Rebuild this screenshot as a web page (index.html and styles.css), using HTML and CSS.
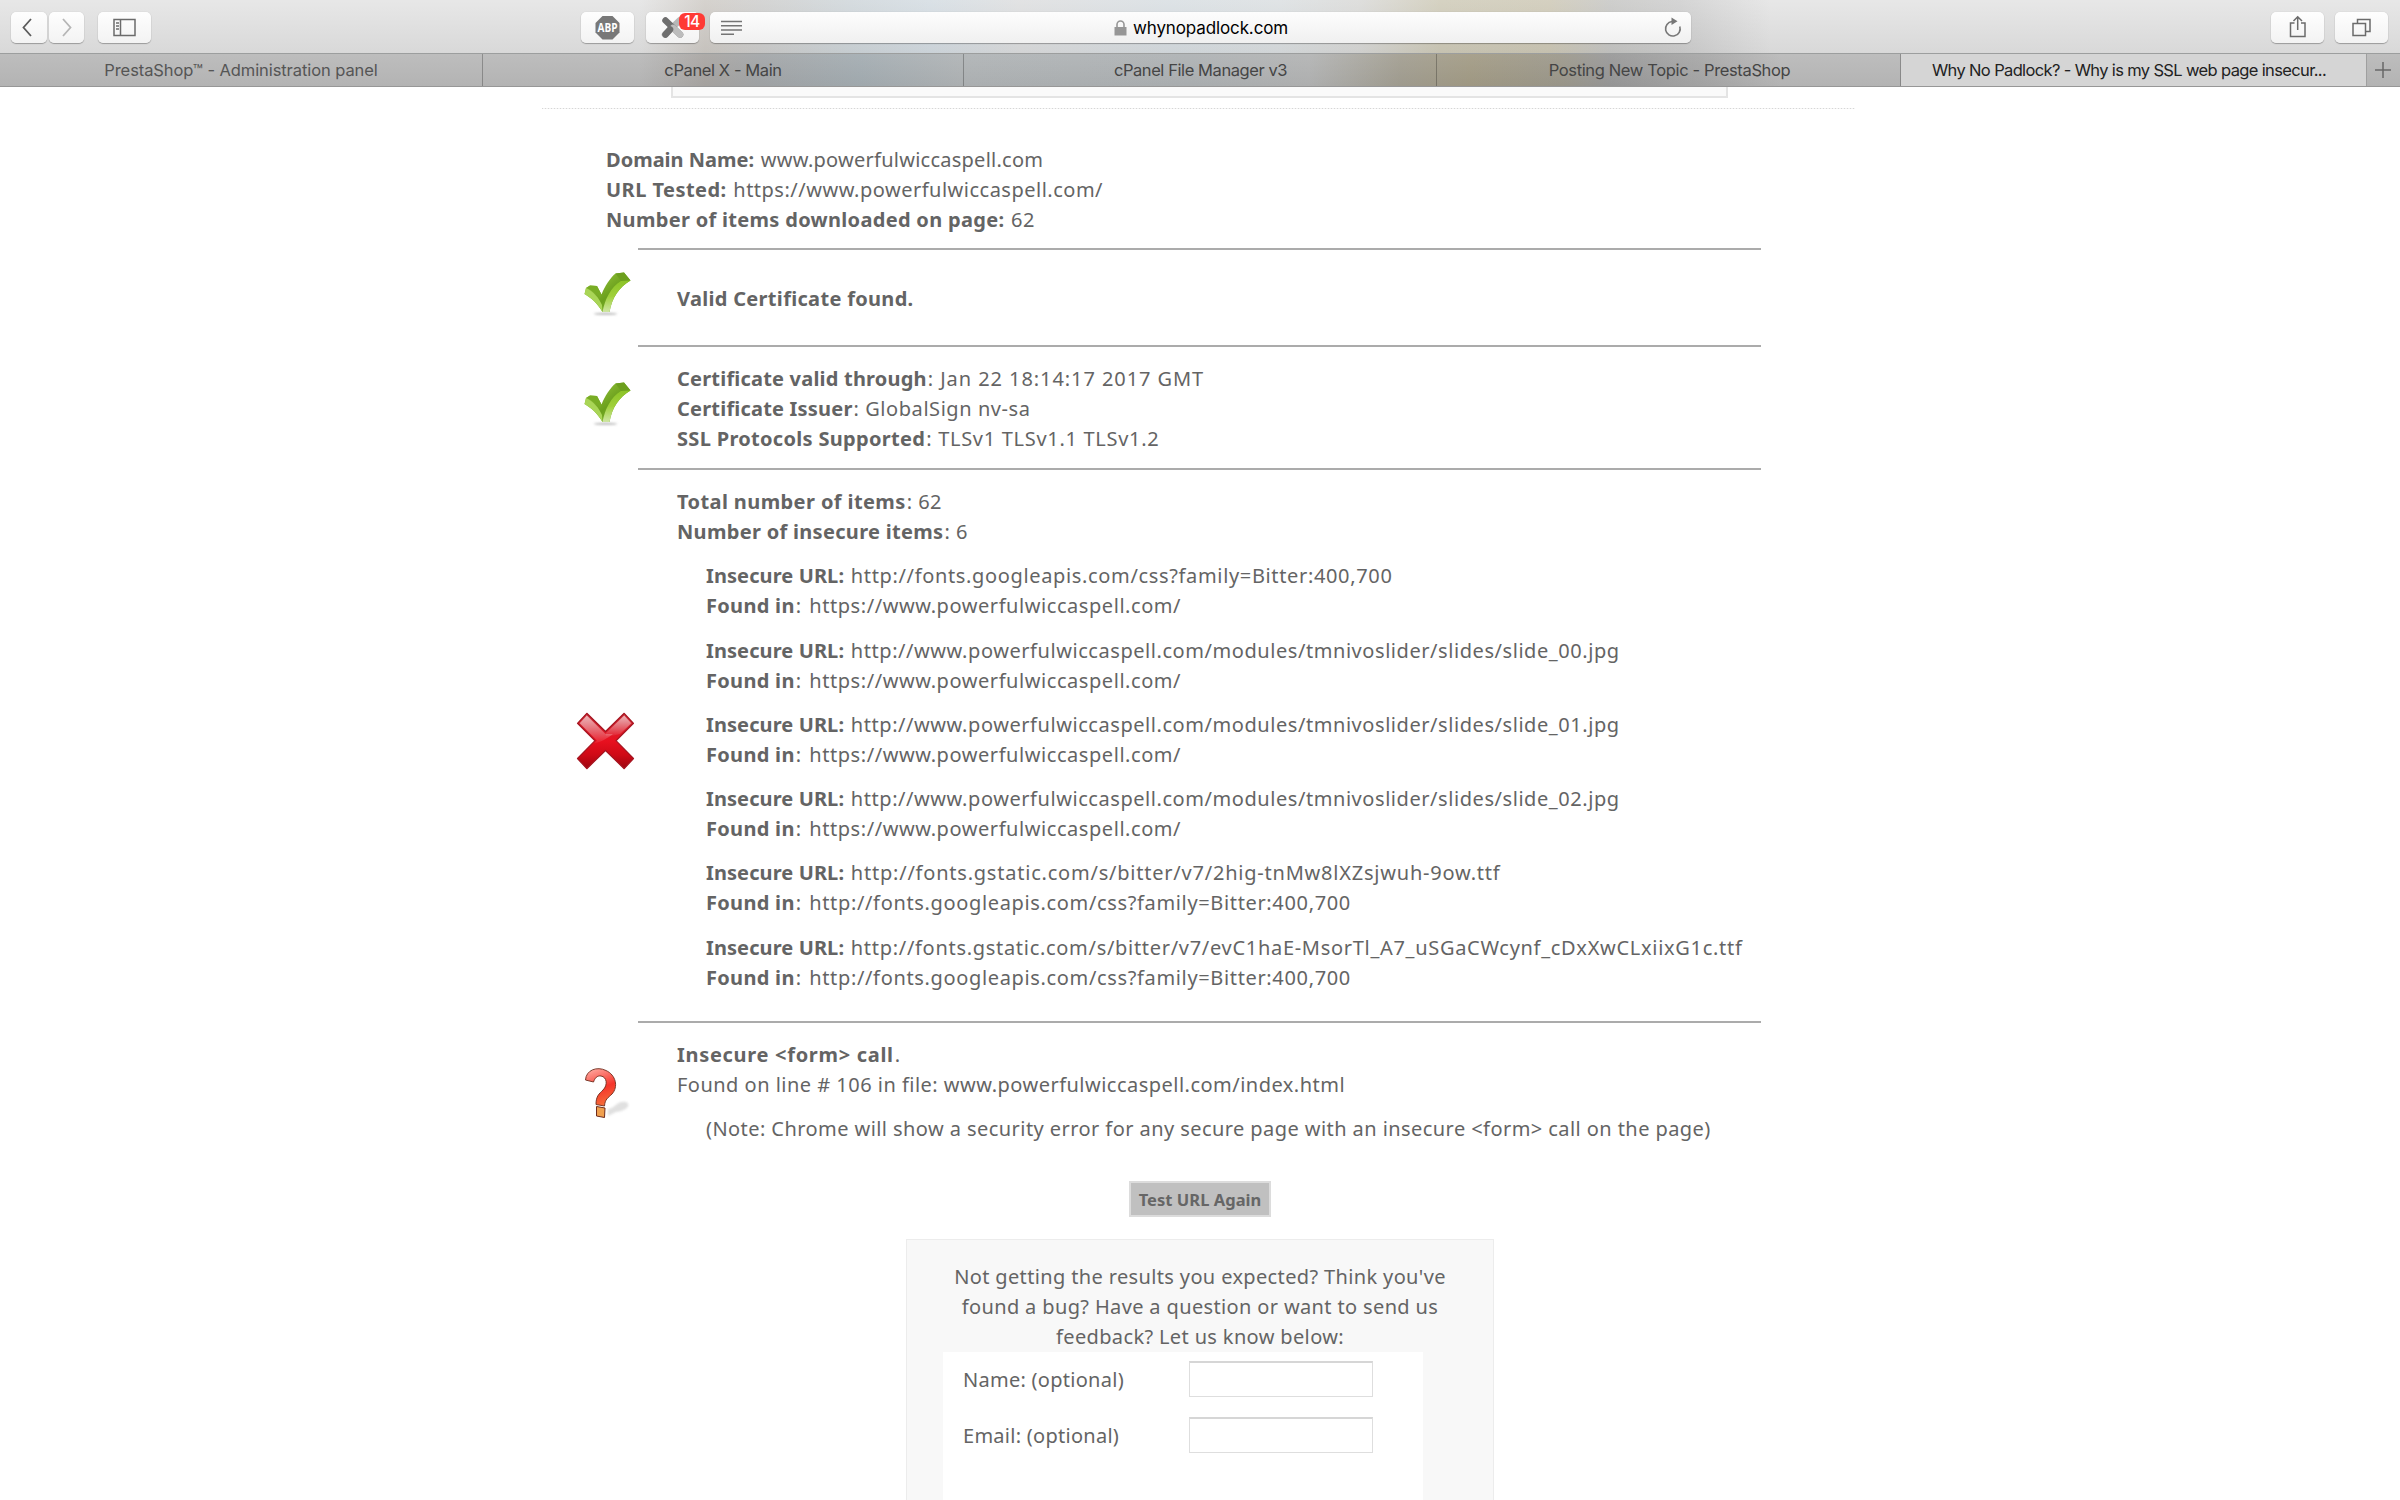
FILE: index.html
```html
<!DOCTYPE html>
<html lang="en">
<head>
    <meta charset="UTF-8">
    <meta name="viewport" content="width=device-width, initial-scale=1.0">
    <title>Why No Padlock? - Why is my SSL web page insecure?</title>
    <link rel="stylesheet" href="styles.css">
</head>
<body>

    <!-- Shared gradients and the check mark -->
    <svg class="defs" width="0" height="0">
        <defs>
            <linearGradient id="green-front" x1="0" y1="0" x2="1" y2="1">
                <stop offset="0" stop-color="#a5d04a"/>
                <stop offset="0.55" stop-color="#6ba01c"/>
                <stop offset="1" stop-color="#8abf38"/>
            </linearGradient>
            <linearGradient id="green-side" x1="0" y1="0" x2="0" y2="1">
                <stop offset="0" stop-color="#8cc327"/>
                <stop offset="0.5" stop-color="#9fd03a"/>
                <stop offset="1" stop-color="#cfe6a4"/>
            </linearGradient>
            <linearGradient id="red" x1="0" y1="0" x2="0" y2="1">
                <stop offset="0" stop-color="#c9303a"/>
                <stop offset="0.5" stop-color="#e8101f"/>
                <stop offset="0.75" stop-color="#cf0a16"/>
                <stop offset="1" stop-color="#9d0510"/>
            </linearGradient>
            <linearGradient id="gloss" x1="0" y1="0" x2="0" y2="1">
                <stop offset="0" stop-color="#ffffff" stop-opacity="0.65"/>
                <stop offset="1" stop-color="#ffffff" stop-opacity="0.05"/>
            </linearGradient>
            <linearGradient id="flame" gradientUnits="userSpaceOnUse" x1="20" y1="9" x2="34" y2="46">
                <stop offset="0" stop-color="#ffa9a0"/>
                <stop offset="0.55" stop-color="#f5352b"/>
                <stop offset="1" stop-color="#f5703a"/>
            </linearGradient>
            <filter id="soft" x="-30%" y="-100%" width="160%" height="300%"><feGaussianBlur stdDeviation="1.3"/></filter>
            <symbol id="check" viewBox="0 0 70 70">
                <ellipse cx="35.500" cy="53.800" rx="12" ry="1.200" fill="#999" opacity="0.6" filter="url(#soft)"/>
                <path d="M14.500 34 L16 28 L20 25.500 L27 26 L31.500 34.500 C35 26 40 18 45.500 13.500 L54 12.500 L60.500 20.500 C49 27 42 38 39.500 52 L32.500 52 C27 43 22 38.500 14.500 34 Z" fill="url(#green-front)"/>
                <path d="M16 28 L20 25.500 L27 26 L31.500 34.500 L30 38 C26 33 22 30 16 28 Z" fill="#79ad25"/>
                <path d="M14.500 34 L16 28 C24 32 29 38 32 45 L32.500 52 C27 43 22 38.500 14.500 34 Z" fill="#a9d556"/>
                <path d="M45.500 13.500 L54 12.500 L60.500 20.500 L51 21 Z" fill="#6c9f1e"/>
                <path d="M51 21 L60.500 20.500 C49 27 42 38 39.500 52 L32.500 52 C35 39 41 27 51 21 Z" fill="url(#green-side)"/>
            </symbol>
        </defs>
    </svg>

    <!-- Browser toolbar -->
    <header class="toolbar">
        <button class="tool back"><svg width="36" height="31" viewBox="0 0 36 31"><path d="M20 7 L12.500 15.500 L20 24" stroke="#5c5c5c" stroke-width="1.800"/></svg></button>
        <button class="tool forward"><svg width="35" height="31" viewBox="0 0 35 31"><path d="M14 7 L21.500 15.500 L14 24" stroke="#b6b6b6" stroke-width="1.800"/></svg></button>
        <button class="tool sidebar"><svg width="53" height="31" viewBox="0 0 53 31"><path d="M16 7.500 H37 V23.500 H16 Z M22.500 7.500 V23.500 M18 11 H21 M18 14 H21 M18 17 H21" stroke="#6b6b6b" stroke-width="1.500"/></svg></button>
        <button class="tool adblock">
            <svg width="53" height="31" viewBox="0 0 53 31">
                <path d="M21.500 4 H31.500 L38.500 11 V20.500 L31.500 27.500 H21.500 L14.500 20.500 V11 Z" fill="#787878"/>
                <text x="26.500" y="20" text-anchor="middle" textLength="20" lengthAdjust="spacingAndGlyphs" class="abp">ABP</text>
            </svg>
        </button>
        <button class="tool blocker">
            <svg width="53" height="31" viewBox="0 0 53 31">
                <path d="M33.500 8.500 L19 22.500" stroke="#b7b7b7" stroke-width="6.500" stroke-linecap="round"/>
                <path d="M19.500 8.500 L34 22.500" stroke="#6e6e6e" stroke-width="6.500" stroke-linecap="round"/>
                <path d="M27 16 L34 22.500" stroke="#bdbdbd" stroke-width="6.500" stroke-linecap="round"/>
                <path d="M24 17.500 L19.500 22.500" stroke="#6e6e6e" stroke-width="6.500" stroke-linecap="round"/>
            </svg>
            <span class="badge">14</span>
        </button>
        <div class="address">
            <svg width="22" height="16" viewBox="0 0 22 16"><path d="M0 1.500 H21 M0 5.700 H21 M0 10 H21 M0 14.200 H13" stroke="#747474" stroke-width="1.500"/></svg>
            <div class="site">
                <svg width="13" height="16" viewBox="0 0 13 16"><path d="M0.500 7 H12.500 V15.500 H0.500 Z" fill="#969696"/><path d="M3 7.500 V4.500 A3.500 3.500 0 0 1 10 4.500 V7.500" stroke="#969696" stroke-width="1.600"/></svg>
                <span>whynopadlock.com</span>
            </div>
            <svg width="20" height="22" viewBox="0 0 20 22"><path d="M9 4.500 A7.300 7.300 0 1 0 16.800 9.500" stroke="#777" stroke-width="1.600"/><path d="M8.500 0.500 L14.500 4.300 L8.500 8 Z" fill="#777"/></svg>
        </div>
        <button class="tool share"><svg width="53" height="31" viewBox="0 0 53 31"><path d="M23.500 11 H19.500 V24.500 H34 V11 H30 M26.700 18 V5 M22.500 9 L26.700 4.700 L31 9" stroke="#6b6b6b" stroke-width="1.500"/></svg></button>
        <button class="tool"><svg width="53" height="31" viewBox="0 0 53 31"><path d="M18 11.500 H30.500 V23.500 H18 Z M22.500 11 V7.500 H35 V19.500 H31" stroke="#6b6b6b" stroke-width="1.500"/></svg></button>
    </header>

    <nav class="tabs">
        <div class="tab tab-1">PrestaShop™ - Administration panel</div>
        <div class="tab tab-2">cPanel X - Main</div>
        <div class="tab tab-3">cPanel File Manager v3</div>
        <div class="tab tab-4">Posting New Topic - PrestaShop</div>
        <div class="tab active">Why No Padlock? - Why is my SSL web page insecur...</div>
        <div class="new-tab"><svg width="18" height="18" viewBox="0 0 18 18"><path d="M8 1 V17 M0 9 H16" stroke="#686868" stroke-width="1.500"/></svg></div>
    </nav>

    <!-- Test results -->
    <main class="page">
        <div class="url-box"></div>
        <div class="dotted"></div>

        <div class="summary">
            <p><b class="ls-0">Domain Name:</b> <span class="ls-25">www.powerfulwiccaspell.com</span></p>
            <p><b class="ls-45">URL Tested:</b> <span class="ls-50">https://www.powerfulwiccaspell.com/</span></p>
            <p><b>Number of items downloaded on page:</b> 62</p>
        </div>

        <section class="result certificate">
            <svg class="icon" width="70" height="70"><use href="#check"/></svg>
            <div class="details">
                <p><b>Valid Certificate found.</b></p>
            </div>
        </section>

        <section class="result protocols">
            <svg class="icon" width="70" height="70"><use href="#check"/></svg>
            <div class="details">
                <p><b class="ls-20">Certificate valid through</b><span class="ls-90">: Jan 22 18:14:17 2017 GMT</span></p>
                <p><b class="ls-20">Certificate Issuer</b><span class="ls-56">: GlobalSign nv-sa</span></p>
                <p><b>SSL Protocols Supported</b><span class="ls-70">: TLSv1 TLSv1.1 TLSv1.2</span></p>
            </div>
        </section>

        <section class="result items">
            <svg class="icon" width="70" height="70" viewBox="0 0 70 70">
                <path d="M16.800 8.300 L7.500 18.300 L25 35.700 L7.500 53.500 L16.800 63.700 L35.500 45.500 L54.200 63.700 L63.500 53.500 L46 35.700 L63.500 18.300 L54.200 8.300 L35.500 26.500 Z" fill="url(#red)" stroke="#a51420" stroke-width="1.200" stroke-linejoin="round"/>
                <path d="M16.800 10.500 L9.700 18.300 L27 35.500 L24 38.500 C31 37 38 33 43 29 L35.500 29 Z" fill="url(#gloss)"/>
                <path d="M54.200 10.500 L61.300 18.300 L50 29 C46 30 42 31 36 31 L35.500 28.500 Z" fill="url(#gloss)"/>
            </svg>
            <div class="details">
                <p><b class="ls-40">Total number of items</b>: 62</p>
                <p><b>Number of insecure items</b>: 6</p>
                <ul class="insecure">
                    <li>
                        <p><b class="ls-10">Insecure URL:</b> <span class="ls-65">http://fonts.googleapis.com/css?family=Bitter:400,700</span></p>
                        <p><b class="ls-30">Found in</b>: <span class="ls-56 found">https://www.powerfulwiccaspell.com/</span></p>
                    </li>
                    <li>
                        <p><b class="ls-10">Insecure URL:</b> <span class="ls-56">http://www.powerfulwiccaspell.com/modules/tmnivoslider/slides/slide_00.jpg</span></p>
                        <p><b class="ls-30">Found in</b>: <span class="ls-56 found">https://www.powerfulwiccaspell.com/</span></p>
                    </li>
                    <li>
                        <p><b class="ls-10">Insecure URL:</b> <span class="ls-56">http://www.powerfulwiccaspell.com/modules/tmnivoslider/slides/slide_01.jpg</span></p>
                        <p><b class="ls-30">Found in</b>: <span class="ls-56 found">https://www.powerfulwiccaspell.com/</span></p>
                    </li>
                    <li>
                        <p><b class="ls-10">Insecure URL:</b> <span class="ls-56">http://www.powerfulwiccaspell.com/modules/tmnivoslider/slides/slide_02.jpg</span></p>
                        <p><b class="ls-30">Found in</b>: <span class="ls-56 found">https://www.powerfulwiccaspell.com/</span></p>
                    </li>
                    <li>
                        <p><b class="ls-10">Insecure URL:</b> <span class="ls-78">http://fonts.gstatic.com/s/bitter/v7/2hig-tnMw8lXZsjwuh-9ow.ttf</span></p>
                        <p><b class="ls-30">Found in</b>: <span class="ls-65 found">http://fonts.googleapis.com/css?family=Bitter:400,700</span></p>
                    </li>
                    <li>
                        <p><b class="ls-10">Insecure URL:</b> <span class="ls-70">http://fonts.gstatic.com/s/bitter/v7/evC1haE-MsorTl_A7_uSGaCWcynf_cDxXwCLxiixG1c.ttf</span></p>
                        <p><b class="ls-30">Found in</b>: <span class="ls-65 found">http://fonts.googleapis.com/css?family=Bitter:400,700</span></p>
                    </li>
                </ul>
            </div>
        </section>

        <section class="result form-call">
            <svg class="icon" width="70" height="70" viewBox="0 0 70 70">
                <path d="M38 49 C46 48 47 40 56 42 C62 45 56 51 46 52 L38 56 Z" fill="#bbb" opacity="0.45" filter="url(#soft)"/>
                <path d="M15.500 20 C16 10 27 6 36 10.500 C46 15 48.500 27 42 34 C38 38 35 39 34.500 46 L26 44.500 C26 36 29 34 33 30 C38 25 37 17 31 16 C27 15.500 25 18 23.500 22 Z" fill="url(#flame)" stroke="#6e2b1c" stroke-width="0.900"/>
                <path d="M26.500 46.500 L35 48 L34.500 57.500 L26.500 56 Z" fill="#f0a04e" stroke="#6e2b1c" stroke-width="1"/>
            </svg>
            <div class="details">
                <p><b class="ls-70">Insecure &lt;form&gt; call</b>.</p>
                <p>Found on line # 106 in file: www.powerfulwiccaspell.com/index.html</p>
                <p class="note">(Note: Chrome will show a security error for any secure page with an insecure &lt;form&gt; call on the page)</p>
            </div>
        </section>

        <button class="test-again">Test URL Again</button>

        <form class="feedback">
            <p>Not getting the results you expected? Think you've<br>found a bug? Have a question or want to send us<br>feedback? Let us know below:</p>
            <div class="fields">
                <div class="field">
                    <label for="name">Name: (optional)</label>
                    <input type="text" id="name">
                </div>
                <div class="field">
                    <label for="email">Email: (optional)</label>
                    <input type="text" id="email">
                </div>
            </div>
        </form>
    </main>

</body>
</html>
```
FILE: styles.css
```css
* {
    margin: 0;
    padding: 0;
    box-sizing: border-box;
}

body {
    height: 1500px;
    overflow: hidden;
    background-color: #fff;
    font-family: "Noto Sans", sans-serif;
    font-size: 20px;
    line-height: 30px;
    letter-spacing: 0.48px;
    color: #646464;
}

svg {
    display: block;
    flex-shrink: 0;
    fill: none;
}

.defs {
    position: absolute;
}

/* Toolbar */
.toolbar {
    display: flex;
    align-items: flex-start;
    height: 54px;
    padding: 12px 12px 0 11px;
    border-bottom: 1px solid #9c9e9e;
    background:
        linear-gradient(to bottom, rgba(255, 255, 255, 0.12), rgba(0, 0, 0, 0.05)),
        linear-gradient(to right, #e4e4e4 640px, #d0ccc7 705px, #cfcfce 760px, #d0d7db 850px, #d5dde3 930px, #dedfe0 1020px, #d9dfe3 1170px, #dce0e2 1280px, #dadad8 1360px, #d0ccba 1440px, #cfcab8 1550px, #c8c8c6 1610px, #cfcfcf 1680px, #e4e4e4 1770px);
}

.tool {
    position: relative;
    height: 31px;
    border: none;
    border-radius: 5px;
    background: linear-gradient(to bottom, #fefefe, #f3f3f3);
    box-shadow: 0 1px 1px rgba(0, 0, 0, 0.28), 0 0 1px rgba(0, 0, 0, 0.2);
}

.forward {
    margin-left: 2px;
}

.sidebar {
    margin-left: 14px;
}

.adblock {
    margin-left: 430px;
}

.blocker {
    margin-left: 12px;
}

.abp {
    font: bold 12px "Open Sans", sans-serif;
    letter-spacing: 0;
    fill: #fff;
}

.badge {
    position: absolute;
    top: 1px;
    left: 33px;
    width: 26px;
    height: 17px;
    border-radius: 6px;
    background-color: #ff3b35;
    color: #fff;
    font: 500 15.5px/17px Inter, sans-serif;
    letter-spacing: -0.5px;
    text-align: center;
}

.address {
    display: flex;
    align-items: center;
    justify-content: space-between;
    width: 981px;
    height: 31px;
    margin-left: 11px;
    padding: 0 8px 0 11px;
    border-radius: 5px;
    background: linear-gradient(to bottom, #fdfdfd, #f0f0f0);
    box-shadow: 0 1px 1px rgba(0, 0, 0, 0.28), 0 0 1px rgba(0, 0, 0, 0.2);
}

.site {
    display: flex;
    align-items: center;
    gap: 6px;
    margin-right: 4px;
    font: 17px/31px Inter, sans-serif;
    letter-spacing: -0.12px;
    color: #000;
}

.site span {
    padding-top: 1px;
}

.share {
    margin-left: auto;
    margin-right: 11px;
}

/* Tabs */
.tabs {
    display: flex;
    height: 33px;
    border-bottom: 1px solid #979797;
    background:
        linear-gradient(to bottom, rgba(255, 255, 255, 0.06), rgba(0, 0, 0, 0.03)),
        linear-gradient(to right, #b9b9b9 640px, #a9a6a3 705px, #a3a6a8 760px, #a4adb2 860px, #b0b4b6 960px, #aeb2b4 1190px, #b3b4b4 1310px, #a39f92 1400px, #a39c86 1470px, #9d998c 1560px, #999999 1610px, #a7a7a7 1700px, #b9b9b9 1780px);
}

.tab {
    border-right: 1px solid rgba(0, 0, 0, 0.25);
    font: 16.5px/32px Inter, sans-serif;
    text-align: center;
    color: #454545;
}

.tab-1 {
    width: 483px;
    letter-spacing: -0.08px;
    color: #555;
}

.tab-2 {
    width: 481px;
    letter-spacing: -0.4px;
}

.tab-3 {
    width: 473px;
    padding-left: 1px;
    letter-spacing: -0.42px;
}

.tab-4 {
    width: 464px;
    padding-left: 2px;
    letter-spacing: -0.36px;
}

.active {
    width: 466px;
    padding-right: 9px;
    background-color: #d5d5d5;
    letter-spacing: -0.64px;
    color: #222;
}

.new-tab {
    flex: 1;
    padding: 7px 0 0 8px;
}

/* Page */
.page {
    width: 1313px;
    margin: 0 auto 0 542px;
}

.url-box {
    width: 1057px;
    height: 11px;
    margin-left: 129px;
    border: 2px solid #e4e4e4;
    border-top: none;
    background-color: #fafafa;
}

.dotted {
    height: 1px;
    margin-top: 10px;
    background: repeating-linear-gradient(to right, #d6d6d6 0, #d6d6d6 1px, #f4f4f4 1px, #f4f4f4 3px);
}

b {
    margin-right: 1px;
    letter-spacing: 0.31px;
}

.summary {
    height: 139px;
    padding: 36px 0 0 64px;
}

.result {
    display: flex;
    margin-left: 28px;
}

.icon {
    margin-right: -2px;
}

.details {
    width: 1123px;
    padding-left: 39px;
    border-top: 2px solid #ababab;
}

.certificate .icon {
    margin-top: 12px;
}

.certificate .details {
    height: 97px;
    padding-top: 34px;
}

.protocols .icon {
    margin-top: 25px;
}

.protocols .details {
    height: 123px;
    padding-top: 17px;
}

.items .icon {
    margin-top: 237px;
}

.items .details {
    height: 553px;
    padding-top: 17px;
}

.form-call .icon {
    margin-top: 39px;
}

.form-call .details {
    height: 160px;
    padding-top: 17px;
}

.insecure {
    padding-left: 29px;
    list-style: none;
}

.insecure li {
    margin-top: 14.3px;
}

.found {
    margin-left: 2px;
}

.note {
    margin-top: 14px;
    padding-left: 29px;
    letter-spacing: 0.43px;
}

.test-again {
    display: block;
    width: 142px;
    height: 36px;
    margin-left: 587px;
    border: 2px solid #dcdcdc;
    background-color: #c0c0c0;
    font: bold 16.5px "Noto Sans", sans-serif;
    letter-spacing: 0.04px;
    white-space: nowrap;
    color: #666;
}

/* Feedback form */
.feedback {
    width: 588px;
    height: 300px;
    margin: 22px 0 0 364px;
    padding: 22px 36px 0 36px;
    border: 1px solid #ececec;
    background-color: #f8f8f8;
    letter-spacing: 0.36px;
    text-align: center;
}

.fields {
    width: 480px;
    height: 200px;
    padding: 9px 20px;
    background-color: #fff;
    text-align: left;
}

.field {
    display: flex;
    align-items: center;
    height: 36px;
    margin-bottom: 20px;
    letter-spacing: 0.27px;
}

.field label {
    width: 226px;
    padding-top: 2px;
}

.field input {
    width: 184px;
    height: 36px;
    border: 1px solid #dedede;
    border-top: 2px solid #d6d6d6;
    background-color: #fff;
}

/* Letter spacing */
.ls-0 { letter-spacing: 0; }
.ls-10 { letter-spacing: 0.1px; }
.ls-20 { letter-spacing: 0.2px; }
.ls-25 { letter-spacing: 0.25px; }
.ls-30 { letter-spacing: 0.3px; }
.ls-40 { letter-spacing: 0.4px; }
.ls-45 { letter-spacing: 0.45px; }
.ls-50 { letter-spacing: 0.5px; }
.ls-56 { letter-spacing: 0.56px; }
.ls-65 { letter-spacing: 0.65px; }
.ls-70 { letter-spacing: 0.7px; }
.ls-78 { letter-spacing: 0.78px; }
.ls-90 { letter-spacing: 0.93px; }
```
